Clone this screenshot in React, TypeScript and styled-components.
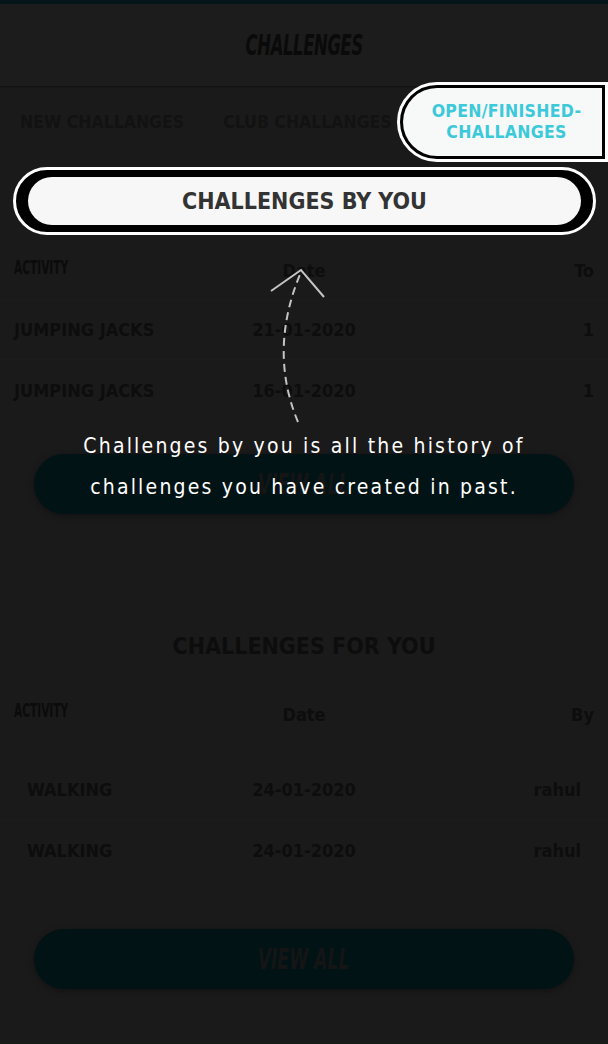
import React from "react";
import styled, { createGlobalStyle } from "styled-components";

const Global = createGlobalStyle`
  html, body { margin: 0; padding: 0; background: #1a1a1a; }
  body { font-family: "DejaVu Sans Condensed", "DejaVu Sans", sans-serif; }
  * { box-sizing: border-box; }
`;

const Page = styled.div`
  position: relative;
  width: 608px;
  height: 1044px;
  overflow: hidden;
  background: #1a1a1a;
  color: #0d0d0d;
`;

const TopBar = styled.div`
  height: 4px;
  background: #04161a;
`;

const Header = styled.header`
  height: 82px;
  display: flex;
  align-items: center;
  justify-content: center;
  background: #1c1c1c;
  box-shadow: 0 1px 2px rgba(0, 0, 0, 0.35);
`;

const Title = styled.h1`
  margin: 0;
  font-family: "DejaVu Sans Condensed", sans-serif;
  font-weight: 700;
  font-style: italic;
  font-size: 28px;
  color: #0a0a0a;
  transform: scaleX(0.65);
  letter-spacing: -0.5px;
`;

const Tabs = styled.nav`
  height: 72px;
  display: flex;
  align-items: center;
  padding-left: 20px;
`;

const Tab = styled.span<{ $gap?: number }>`
  font-weight: 700;
  font-size: 17.5px;
  color: #121212;
  margin-right: ${(p) => p.$gap ?? 0}px;
  white-space: nowrap;
`;

const ActiveRing = styled.div`
  margin-left: auto;
  height: 80px;
  width: 211px;
  flex-shrink: 0;
  border: 3px solid #fff;
  border-radius: 40px 0 0 40px;
  background: #000;
  padding: 3px;
  display: flex;
`;

const ActivePill = styled.div`
  flex: 1;
  background: #f7f8f8;
  border-radius: 34px 0 0 34px;
  display: flex;
  align-items: center;
  justify-content: center;
  text-align: center;
  color: #3cc9da;
  font-family: "DejaVu Sans Condensed", sans-serif;
  font-weight: 700;
  font-size: 17.5px;
  line-height: 21px;
  padding-left: 8px;
  letter-spacing: 0.3px;
`;

const SectionRing = styled.div`
  margin: 9px 12px 0 13px;
  height: 68px;
  border: 3px solid #fff;
  border-radius: 34px;
  background: #000;
  padding: 7px 12px;
  display: flex;
`;

const SectionPill = styled.div`
  flex: 1;
  background: #f7f7f7;
  border-radius: 24px;
  display: flex;
  align-items: center;
  justify-content: center;
  font-family: "DejaVu Sans Condensed", sans-serif;
  font-weight: 700;
  font-size: 23px;
  color: #333;
`;

const SectionTitle = styled.h2`
  margin: 117px 0 0;
  text-align: center;
  font-family: "DejaVu Sans Condensed", sans-serif;
  font-weight: 700;
  font-size: 23px;
  color: #0d0d0d;
  line-height: 30px;
`;

const Row = styled.div<{ $h: number; $pad: number; $top?: number; $line?: boolean }>`
  display: grid;
  grid-template-columns: 1fr 1fr 1fr;
  align-items: center;
  height: ${(p) => p.$h}px;
  padding: ${(p) => p.$top ?? 0}px ${(p) => p.$pad}px 0;
  border-bottom: ${(p) => (p.$line ? "1px solid #1c1c1c" : "none")};
`;

const HeadLabel = styled.span`
  justify-self: start;
  font-family: "DejaVu Sans Condensed", sans-serif;
  font-weight: 700;
  font-size: 19px;
  color: #0b0b0b;
  display: inline-block;
  white-space: nowrap;
  transform: scaleX(0.62) translateY(-4px);
  transform-origin: left center;
`;

const Cell = styled.span<{ $align: "start" | "center" | "end" }>`
  justify-self: ${(p) => p.$align};
  font-size: 18px;
  font-weight: 700;
  color: #0d0d0d;
  white-space: nowrap;
`;

const ViewAll = styled.button<{ $top: number }>`
  display: flex;
  align-items: center;
  justify-content: center;
  width: 540px;
  height: 60px;
  margin: ${(p) => p.$top}px 0 0 34px;
  border: none;
  border-radius: 30px;
  background: #021315;
  box-shadow: 0 2px 6px rgba(0, 0, 0, 0.35);
  font-family: "DejaVu Sans Condensed", sans-serif;
  font-weight: 700;
  font-style: italic;
  font-size: 29px;
  color: #151515;
`;

const ViewAllText = styled.span`
  display: inline-block;
  transform: scaleX(0.66);
`;

const Callout = styled.p`
  position: absolute;
  top: 426px;
  left: 0;
  right: 0;
  margin: 0;
  text-align: center;
  color: #fff;
  font-family: "DejaVu Sans Condensed", sans-serif;
  font-weight: 500;
  font-size: 21px;
  line-height: 41px;
  letter-spacing: 2.2px;
`;

const ArrowSvg = styled.svg`
  position: absolute;
  left: 0;
  top: 0;
  pointer-events: none;
`;

export default function App() {
  return (
    <Page>
      <Global />
      <TopBar />
      <Header>
        <Title>CHALLENGES</Title>
      </Header>
      <Tabs>
        <Tab $gap={39}>NEW CHALLANGES</Tab>
        <Tab>CLUB CHALLANGES</Tab>
        <ActiveRing>
          <ActivePill>
            OPEN/FINISHED-
            <br />
            CHALLANGES
          </ActivePill>
        </ActiveRing>
      </Tabs>

      <SectionRing>
        <SectionPill>CHALLENGES BY YOU</SectionPill>
      </SectionRing>

      <Row $h={65} $top={7} $pad={14} $line>
        <HeadLabel>ACTIVITY</HeadLabel>
        <Cell $align="center">Date</Cell>
        <Cell $align="end">To</Cell>
      </Row>
      <Row $h={60} $pad={14} $line>
        <Cell $align="start">JUMPING JACKS</Cell>
        <Cell $align="center">21-01-2020</Cell>
        <Cell $align="end">1</Cell>
      </Row>
      <Row $h={60} $pad={14}>
        <Cell $align="start">JUMPING JACKS</Cell>
        <Cell $align="center">16-01-2020</Cell>
        <Cell $align="end">1</Cell>
      </Row>
      <ViewAll $top={34}>
        <ViewAllText>VIEW ALL</ViewAllText>
      </ViewAll>

      <SectionTitle>CHALLENGES FOR YOU</SectionTitle>

      <Row $h={98} $top={8} $pad={14}>
        <HeadLabel>ACTIVITY</HeadLabel>
        <Cell $align="center">Date</Cell>
        <Cell $align="end">By</Cell>
      </Row>
      <Row $h={61} $pad={27} $line>
        <Cell $align="start">WALKING</Cell>
        <Cell $align="center">24-01-2020</Cell>
        <Cell $align="end">rahul</Cell>
      </Row>
      <Row $h={61} $pad={27}>
        <Cell $align="start">WALKING</Cell>
        <Cell $align="center">24-01-2020</Cell>
        <Cell $align="end">rahul</Cell>
      </Row>
      <ViewAll $top={48}>
        <ViewAllText>VIEW ALL</ViewAllText>
      </ViewAll>

      <ArrowSvg width="608" height="1044" viewBox="0 0 608 1044">
        <path
          d="M298 422 Q268 350 301 272"
          fill="none"
          stroke="#c4c4c4"
          strokeWidth="2"
          strokeDasharray="8 5"
        />
        <path
          d="M271 291 L301 270 L324 297"
          fill="none"
          stroke="#c4c4c4"
          strokeWidth="2"
        />
      </ArrowSvg>

      <Callout>
        Challenges by you is all the history of
        <br />
        challenges you have created in past.
      </Callout>
    </Page>
  );
}
